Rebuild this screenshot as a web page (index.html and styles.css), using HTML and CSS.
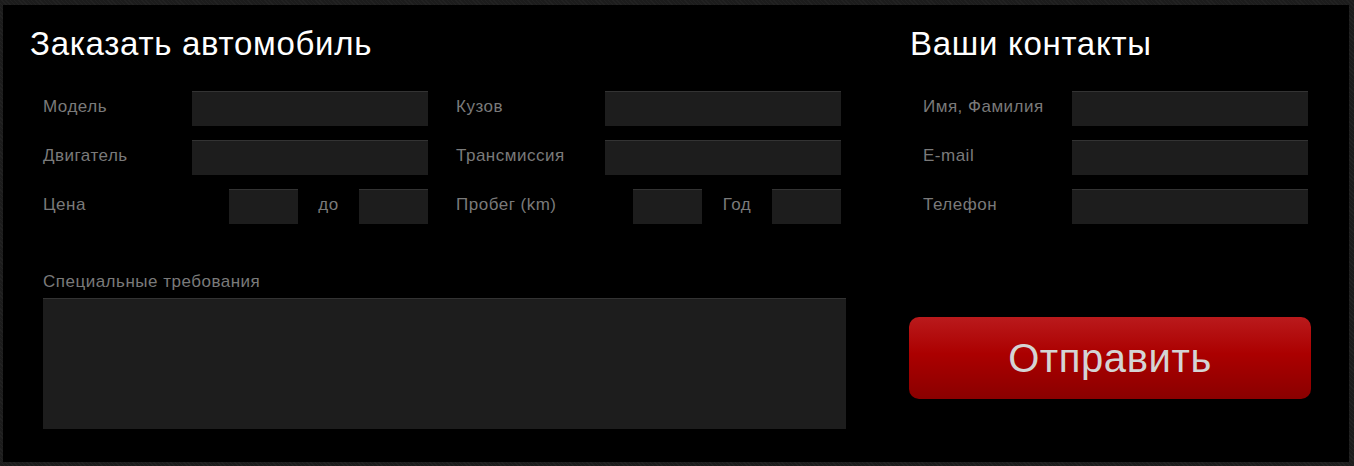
FILE: index.html
```html
<!DOCTYPE html>
<html lang="ru">
<head>
<meta charset="utf-8">
<title>Заказать автомобиль</title>
<link rel="stylesheet" href="styles.css">
</head>
<body>
<form class="panel">
  <section class="order">
    <h2 class="title">Заказать автомобиль</h2>
    <div class="cols">
      <div class="col">
        <div class="row"><label class="lbl">Модель</label><input class="inp wide" type="text"></div>
        <div class="row"><label class="lbl">Двигатель</label><input class="inp wide" type="text"></div>
        <div class="row"><label class="lbl">Цена</label><input class="inp small" type="text"><span class="sep sep-a">до</span><input class="inp small" type="text"></div>
      </div>
      <div class="col">
        <div class="row"><label class="lbl">Кузов</label><input class="inp wide" type="text"></div>
        <div class="row"><label class="lbl">Трансмиссия</label><input class="inp wide" type="text"></div>
        <div class="row"><label class="lbl">Пробег (km)</label><input class="inp small" type="text"><span class="sep sep-b">Год</span><input class="inp small" type="text"></div>
      </div>
    </div>
    <div class="special">
      <label class="lbl">Специальные требования</label>
      <textarea class="area"></textarea>
    </div>
  </section>
  <section class="contacts">
    <h2 class="title">Ваши контакты</h2>
    <div class="col">
      <div class="row"><label class="lbl">Имя, Фамилия</label><input class="inp wide" type="text"></div>
      <div class="row"><label class="lbl">E-mail</label><input class="inp wide" type="text"></div>
      <div class="row"><label class="lbl">Телефон</label><input class="inp wide" type="text"></div>
    </div>
    <button class="send" type="button">Отправить</button>
  </section>
</form>
</body>
</html>
```
FILE: styles.css
```css
html, body {
  margin: 0;
  padding: 0;
}
body {
  background: #1f1f1f;
  background-image: repeating-linear-gradient(45deg, #222 0 1px, #1c1c1c 1px 3px);
  width: 1354px;
  height: 466px;
  font-family: "Liberation Sans", Arial, sans-serif;
  padding: 5px 5px 4px 3px;
  box-sizing: border-box;
}
.panel {
  margin: 0;
  background: #000;
  height: 457px;
  box-sizing: border-box;
  display: flex;
  padding: 21px 38px 0 27px;
}
.title {
  margin: 0;
  font-weight: normal;
  font-size: 33px;
  letter-spacing: 0.7px;
  line-height: 36px;
  color: #fff;
}
.order {
  width: 819px;
}
.cols {
  display: flex;
  gap: 28px;
  margin: 29px 0 0 13px;
}
.col {
  display: flex;
  flex-direction: column;
  gap: 14px;
  width: 385px;
}
.row {
  display: flex;
  align-items: center;
  height: 35px;
}
.lbl {
  font-size: 17px;
  letter-spacing: 0.5px;
  color: #7a7a7a;
  line-height: 20px;
}
.row .lbl,
.row .sep {
  padding-bottom: 3px;
}
.row .lbl {
  flex: 1;
}
.inp {
  height: 35px;
  box-sizing: border-box;
  background: #1d1d1d;
  border: none;
  border-top: 1px solid #333;
  margin: 0;
  padding: 0 8px;
  color: #ccc;
  outline: none;
}
.wide { width: 236px; }
.small { width: 69px; }
.sep {
  font-size: 17px;
  letter-spacing: 0.5px;
  line-height: 20px;
  color: #7a7a7a;
  text-align: center;
}
.sep-a { width: 61px; }
.sep-b { width: 70px; }
.special {
  margin: 48px 0 0 13px;
  display: flex;
  flex-direction: column;
  gap: 6px;
}
.area {
  width: 803px;
  height: 131px;
  box-sizing: border-box;
  background: #1d1d1d;
  border: none;
  border-top: 1px solid #333;
  margin: 0;
  resize: none;
  outline: none;
}
.contacts {
  margin-left: 63px;
  width: 402px;
  display: flex;
  flex-direction: column;
}
.contacts .title {
  margin-left: 1px;
}
.contacts .col {
  margin: 29px 0 0 14px;
}
.send {
  margin-top: 93px;
  width: 402px;
  height: 82px;
  border: none;
  border-radius: 10px;
  background: linear-gradient(to bottom, #ba1a1c 0%, #ab0000 45%, #8a0000 100%);
  color: #d4d4d4;
  font-family: "Liberation Sans", Arial, sans-serif;
  font-size: 40px;
  letter-spacing: 0.6px;
  padding: 0;
  cursor: pointer;
}
```
